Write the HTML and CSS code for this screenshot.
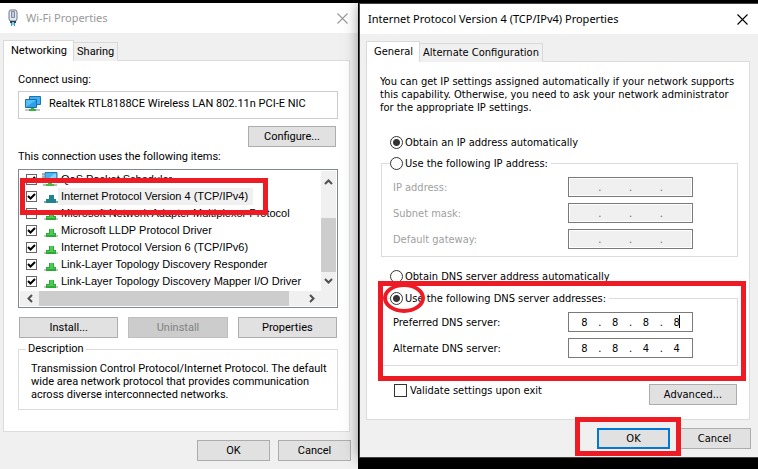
FILE: index.html
```html
<!DOCTYPE html>
<html lang="en">
<head>
<meta charset="utf-8">
<title>Wi-Fi Properties</title>
<link rel="stylesheet" href="styles.css">
</head>
<body>
<svg width="0" height="0" class="defs" aria-hidden="true">
  <symbol id="net" viewBox="0 0 14 14">
    <path d="M0 10h14v2H0z" fill="#c3c7c3"/>
    <path d="M5 4h5v4h2v4H2V8h3z" fill="#2fa83a"/>
    <path d="M6 4h3v5h2v1H3V9h3z" fill="#4ecb56"/>
  </symbol>
  <symbol id="close" viewBox="0 0 11 11">
    <path d="M.5.5l10 10M10.5.5l-10 10" fill="none" stroke="currentColor" stroke-width="1.1"/>
  </symbol>
</svg>

<main class="window wifi">
  <header class="titlebar inactive">
    <svg class="plug" width="10" height="18" viewBox="0 0 10 18" aria-hidden="true">
      <path d="M2 1h6l1 2v7l-1 2H2l-1-2V3z" fill="#e3e7ef" stroke="#6d7a90"/>
      <path d="M3.500 2.500h3v6h-3z" fill="#c3ccda" stroke="#7f8ca3"/>
      <path d="M2 12h6v2H2z" fill="#33404d"/>
      <path d="M3 14h1v3H3zM6 14h1v3H6z" fill="#2aa3d9"/>
      <path d="M4 13h2v3H4z" fill="#7fd0f0"/>
    </svg>
    <h1>Wi-Fi Properties</h1>
    <button class="close" aria-label="Close"><svg width="11" height="11"><use href="#close"/></svg></button>
  </header>
  <div class="body">
    <nav class="tabs"><button class="tab on">Networking</button><button class="tab">Sharing</button></nav>
    <section class="panel">
      <p class="line">Connect using:</p>
      <div class="adapter">
        <svg width="16" height="16" viewBox="0 0 16 16" aria-hidden="true">
          <path d="M4.500.5h11v8h-11z" fill="#3fb0f5" stroke="#2273a8"/>
          <path d="M.5 3.500h11v8H.5z" fill="#55c0fb" stroke="#1f6d9f"/>
          <path d="M1 11l10-7v7z" fill="#2f9fe8"/>
          <path d="M0 13h15v2H0z" fill="#c3c7c3"/>
          <path d="M6 12h3v1h2v2H4v-2h2z" fill="#38b143"/>
        </svg>
        <span>Realtek RTL8188CE Wireless LAN 802.11n PCI-E NIC</span>
      </div>
      <div class="right"><button class="btn configure">Configure...</button></div>
      <p class="line items-title">This connection uses the following items:</p>
      <div class="list">
        <div class="rows">
          <label><input type="checkbox" checked><svg class="ico" viewBox="0 0 16 15"><path d="M3 .5h12v9H3z" fill="#48b4f2" stroke="#2878ab"/><path d="M4 9l8-7h2v7z" fill="#8ad3fa"/><path d="M1 1v8M0 2h3M0 5h3" stroke="#8b9298"/><path d="M1 12h14v2H1z" fill="#b9bdb9"/><path d="M6 9h4v3h2v2H4v-2h2z" fill="#3fbd48"/></svg><span>QoS Packet Scheduler</span></label>
          <label class="sel"><input type="checkbox" checked><svg class="ico" viewBox="0 0 14 14"><path d="M0 10h14v2H0z" fill="#7fa6bf"/><path d="M5 4h5v4h2v4H2V8h3z" fill="#20848f"/></svg><span>Internet Protocol Version 4 (TCP/IPv4)</span></label>
          <label><input type="checkbox"><svg class="ico"><use href="#net"/></svg><span>Microsoft Network Adapter Multiplexor Protocol</span></label>
          <label><input type="checkbox" checked><svg class="ico"><use href="#net"/></svg><span>Microsoft LLDP Protocol Driver</span></label>
          <label><input type="checkbox" checked><svg class="ico"><use href="#net"/></svg><span>Internet Protocol Version 6 (TCP/IPv6)</span></label>
          <label><input type="checkbox" checked><svg class="ico"><use href="#net"/></svg><span>Link-Layer Topology Discovery Responder</span></label>
          <label><input type="checkbox" checked><svg class="ico"><use href="#net"/></svg><span>Link-Layer Topology Discovery Mapper I/O Driver</span></label>
        </div>
        <div class="vbar" aria-hidden="true">
          <svg viewBox="0 0 9 6"><path d="M1 5l3.500-3.500L8 5"/></svg>
          <i></i>
          <svg viewBox="0 0 9 6"><path d="M1 1l3.500 3.500L8 1"/></svg>
        </div>
        <div class="hbar" aria-hidden="true">
          <svg viewBox="0 0 6 9"><path d="M5 1L1.500 4.500 5 8"/></svg>
          <i></i>
          <svg viewBox="0 0 6 9"><path d="M1 1l3.500 3.500L1 8"/></svg>
        </div>
        <div class="mark mark-item"></div>
      </div>
      <div class="trio"><button class="btn">Install...</button><button class="btn" disabled>Uninstall</button><button class="btn">Properties</button></div>
      <fieldset class="desc">
        <legend>Description</legend>
        <p>Transmission Control Protocol/Internet Protocol. The default wide area network protocol that provides communication across diverse interconnected networks.</p>
      </fieldset>
    </section>
    <footer class="actions"><button class="btn">OK</button><button class="btn">Cancel</button></footer>
  </div>
</main>

<section class="window ipv4">
  <header class="titlebar">
    <h1>Internet Protocol Version 4 (TCP/IPv4) Properties</h1>
    <button class="close" aria-label="Close"><svg width="11" height="11"><use href="#close"/></svg></button>
  </header>
  <div class="body">
    <nav class="tabs"><button class="tab on">General</button><button class="tab">Alternate Configuration</button></nav>
    <form class="panel">
      <p class="intro">You can get IP settings assigned automatically if your network supports this capability. Otherwise, you need to ask your network administrator for the appropriate IP settings.</p>
      <label class="radio first"><input type="radio" name="ip" checked>Obtain an IP address automatically</label>
      <fieldset class="group ip">
        <legend><label class="radio"><input type="radio" name="ip">Use the following IP address:</label></legend>
        <div class="field off"><label for="ip1">IP address:</label>
          <div class="octets"><input id="ip1" disabled><b>.</b><input aria-label="IP address 2" disabled><b>.</b><input aria-label="IP address 3" disabled><b>.</b><input aria-label="IP address 4" disabled></div></div>
        <div class="field off"><label for="sm1">Subnet mask:</label>
          <div class="octets"><input id="sm1" disabled><b>.</b><input aria-label="Subnet mask 2" disabled><b>.</b><input aria-label="Subnet mask 3" disabled><b>.</b><input aria-label="Subnet mask 4" disabled></div></div>
        <div class="field off"><label for="gw1">Default gateway:</label>
          <div class="octets"><input id="gw1" disabled><b>.</b><input aria-label="Default gateway 2" disabled><b>.</b><input aria-label="Default gateway 3" disabled><b>.</b><input aria-label="Default gateway 4" disabled></div></div>
      </fieldset>
      <label class="radio auto-dns"><input type="radio" name="dns">Obtain DNS server address automatically</label>
      <fieldset class="group dns">
        <legend><label class="radio"><input type="radio" name="dns" checked>Use the following DNS server addresses:</label></legend>
        <div class="field"><label for="pd1">Preferred DNS server:</label>
          <div class="octets caret"><input id="pd1" value="8"><b>.</b><input aria-label="Preferred DNS 2" value="8"><b>.</b><input aria-label="Preferred DNS 3" value="8"><b>.</b><input aria-label="Preferred DNS 4" value="8"></div></div>
        <div class="field"><label for="ad1">Alternate DNS server:</label>
          <div class="octets"><input id="ad1" value="8"><b>.</b><input aria-label="Alternate DNS 2" value="8"><b>.</b><input aria-label="Alternate DNS 3" value="4"><b>.</b><input aria-label="Alternate DNS 4" value="4"></div></div>
        <div class="mark mark-dns"></div>
        <div class="mark mark-radio"></div>
      </fieldset>
      <div class="bottom">
        <label class="validate"><input type="checkbox">Validate settings upon exit</label>
        <button type="button" class="btn">Advanced...</button>
      </div>
    </form>
    <footer class="actions"><span class="ok-wrap"><button class="btn default">OK</button><span class="mark mark-ok"></span></span><button class="btn">Cancel</button></footer>
  </div>
</section>
</body>
</html>
```
FILE: styles.css
```css
* { box-sizing: border-box; }

body {
  margin: 0;
  min-height: 100vh;
  display: flex;
  gap: 2px;
  background: #000;
  color: #000;
  font: 11px/13px Roboto, "Liberation Sans", sans-serif;
}
button, input { font: inherit; color: inherit; }
p, h1, fieldset { margin: 0; }
.defs { position: absolute; }

/* windows */
.window { display: flex; flex-direction: column; background: #f0f0f0; min-width: 0; }
.wifi { flex: 358 1 0; margin-top: 3px; }
.ipv4 {
  flex: 398 1 0;
  align-self: flex-start;
  margin-top: 4px;
  position: relative;
  font-family: "DejaVu Sans Condensed", "DejaVu Sans", sans-serif;
  box-shadow: 0 0 0 1px #444, 0 0 14px rgba(0, 0, 0, .5);
}
.titlebar {
  height: 30px;
  display: flex;
  align-items: center;
  padding: 0 10px 0 8px;
  background: #fff;
}
.titlebar h1 { flex: 1; font: 11px/16px "Noto Sans", sans-serif; }
.plug { margin-right: 8px; }
.inactive { color: #999; }
.close { border: 0; padding: 0; background: none; display: flex; }

/* tabs */
.tabs { display: flex; align-items: flex-end; height: 21px; }
.tab {
  height: 19px;
  padding: 0 3px;
  border: 1px solid #d9d9d9;
  border-left: 0;
  border-bottom-color: transparent;
  background: #f0f0f0;
}
.tab.on {
  height: 21px;
  padding: 0 6px 2px 7px;
  border-left: 1px solid #d9d9d9;
  background: #fff;
  border-bottom: 0;
  position: relative;
}
.body { padding: 7px 7px 8px 3px; }
.ipv4 .body { padding-left: 6px; }
.panel {
  display: block;
  margin-top: -1px;
  border: 1px solid #dcdcdc;
  background: #fff;
}
.wifi .panel { padding: 12px 11px 21px 14px; margin-right: 1px; }
.ipv4 .panel { padding: 13px 11px 14px 13px; margin-right: 1px; }
.line { line-height: 14px; }

/* buttons */
.btn {
  height: 21px;
  padding: 0;
  border: 1px solid #adadad;
  background: #e1e1e1;
}
.btn:disabled { background: #ccc; border-color: #bfbfbf; color: #838383; }
.btn.default { border: 2px solid #0078d7; }
.right { display: flex; justify-content: flex-end; margin-top: 7px; padding-right: 2px; }
.configure { width: 88px; }
.actions { display: flex; justify-content: flex-end; gap: 8px; margin-top: 8px; }
.actions .btn { width: 73px; }

/* adapter and item list */
.adapter {
  display: flex;
  align-items: center;
  gap: 8px;
  height: 28px;
  margin-top: 4px;
  padding: 0 6px 3px;
  border: 1px solid #ccc;
}
.items-title { margin-top: 3px; }
.list {
  position: relative;
  display: grid;
  grid-template-columns: 1fr 15px;
  margin-top: 5px;
  padding: 1px;
  border: 1px solid #828790;
  font-family: "Liberation Sans", Arial, sans-serif;
}
.rows { height: 120px; overflow: hidden; }
.rows label { display: flex; align-items: center; height: 17px; padding-left: 6px; }
.rows span { padding: 0 5px 0 3px; line-height: 17px; white-space: nowrap; }
.sel span { background: #f0f0f0; }
.ico { width: 14px; height: 14px; margin: 2px 0 0 7px; }
.rows label:first-child .ico { width: 16px; height: 15px; margin: 0 0 0 5px; }
input[type="checkbox"], input[type="radio"] {
  appearance: none;
  flex: none;
  margin: 0;
  background: #fff center / 100% no-repeat;
}
.rows input { width: 11px; height: 11px; border: 1px solid #666; }
.rows input:checked {
  background-image: url("data:image/svg+xml,%3Csvg xmlns='http://www.w3.org/2000/svg' viewBox='0 0 9 9'%3E%3Cpath d='M1 4l2.500 2.500L8 2' fill='none' stroke='%23000' stroke-width='2'/%3E%3C/svg%3E");
}
.vbar, .hbar { display: flex; align-items: center; background: #f0f0f0; }
.vbar { flex-direction: column; padding: 8px 0 7px; }
.vbar i { width: 15px; height: 54px; margin: auto 0 6px; background: #cdcdcd; }
.hbar { grid-column: 1 / -1; height: 15px; padding: 0 21px 0 7px; }
.hbar i { flex: 1; height: 15px; margin: 0 20px 0 6px; background: #cdcdcd; }
.vbar svg { width: 9px; height: 6px; }
.hbar svg { width: 6px; height: 9px; }
.vbar path, .hbar path { fill: none; stroke: #505050; stroke-width: 2; }

.trio { display: grid; grid-template-columns: repeat(3, 1fr); gap: 10px; margin-top: 9px; padding: 0 1px; }

/* group boxes */
fieldset { border: 1px solid #dcdcdc; min-width: 0; }
.desc { margin-top: 4px; padding: 6px 8px 8px 12px; }
.desc legend { margin-left: -5px; padding: 0 2px; line-height: 14px; }
.group { position: relative; margin-left: 1px; padding: 7px 44px 7px 11px; }
.group legend { margin-left: -3px; padding: 0 3px 0 0; }
.ip { margin-top: 7px; }
.dns { margin-top: 8px; }

.radio { display: flex; align-items: center; height: 14px; gap: 2px; }
.radio input { width: 13px; height: 13px; border: 1px solid #333; border-radius: 50%; }
.radio input:checked { background: radial-gradient(circle, #333 0 3px, #fff 4px); }
.first { margin: 21px 0 0 10px; }
.auto-dns { margin: 12px 0 0 10px; }

.field { display: flex; align-items: center; justify-content: space-between; }
.field + .field { margin-top: 6px; }
.off > label { color: #a0a0a0; }
.octets {
  position: relative;
  display: flex;
  align-items: center;
  width: 125px;
  height: 20px;
  padding: 0 2px;
  border: 1px solid #7a7a7a;
  background: #fff;
}
.off .octets { box-shadow: inset 0 0 0 1px #fff; background: #f0f0f0; color: #666; }
.octets input {
  flex: 1;
  min-width: 0;
  height: 16px;
  padding: 0;
  border: 0;
  background: none;
  text-align: center;
}
.octets b { width: 4px; font-weight: normal; text-align: center; }
.caret::after { content: ""; position: absolute; right: 12px; top: 2px; width: 1px; height: 13px; background: #000; }

.bottom { display: flex; justify-content: space-between; margin-top: 18px; padding: 0 1px 0 14px; }
.bottom .btn { width: 88px; }
.validate { display: flex; gap: 3px; height: 13px; }
.validate input { width: 13px; height: 13px; border: 1px solid #333; }

/* red highlights lying over the dialogs */
.mark { position: absolute; border: 5px solid #ed1c24; pointer-events: none; }
.mark-item { left: 1px; top: 8px; width: 248px; height: 37px; }
.mark-dns { left: -4px; right: -9px; top: -24px; height: 100px; }
.mark-radio { left: 1px; top: -22px; width: 42px; height: 30px; border-radius: 50%; border-width: 4px; }
.ok-wrap { position: relative; display: flex; }
.mark-ok { left: -22px; top: -11px; width: 106px; height: 39px; z-index: 1; }
```
